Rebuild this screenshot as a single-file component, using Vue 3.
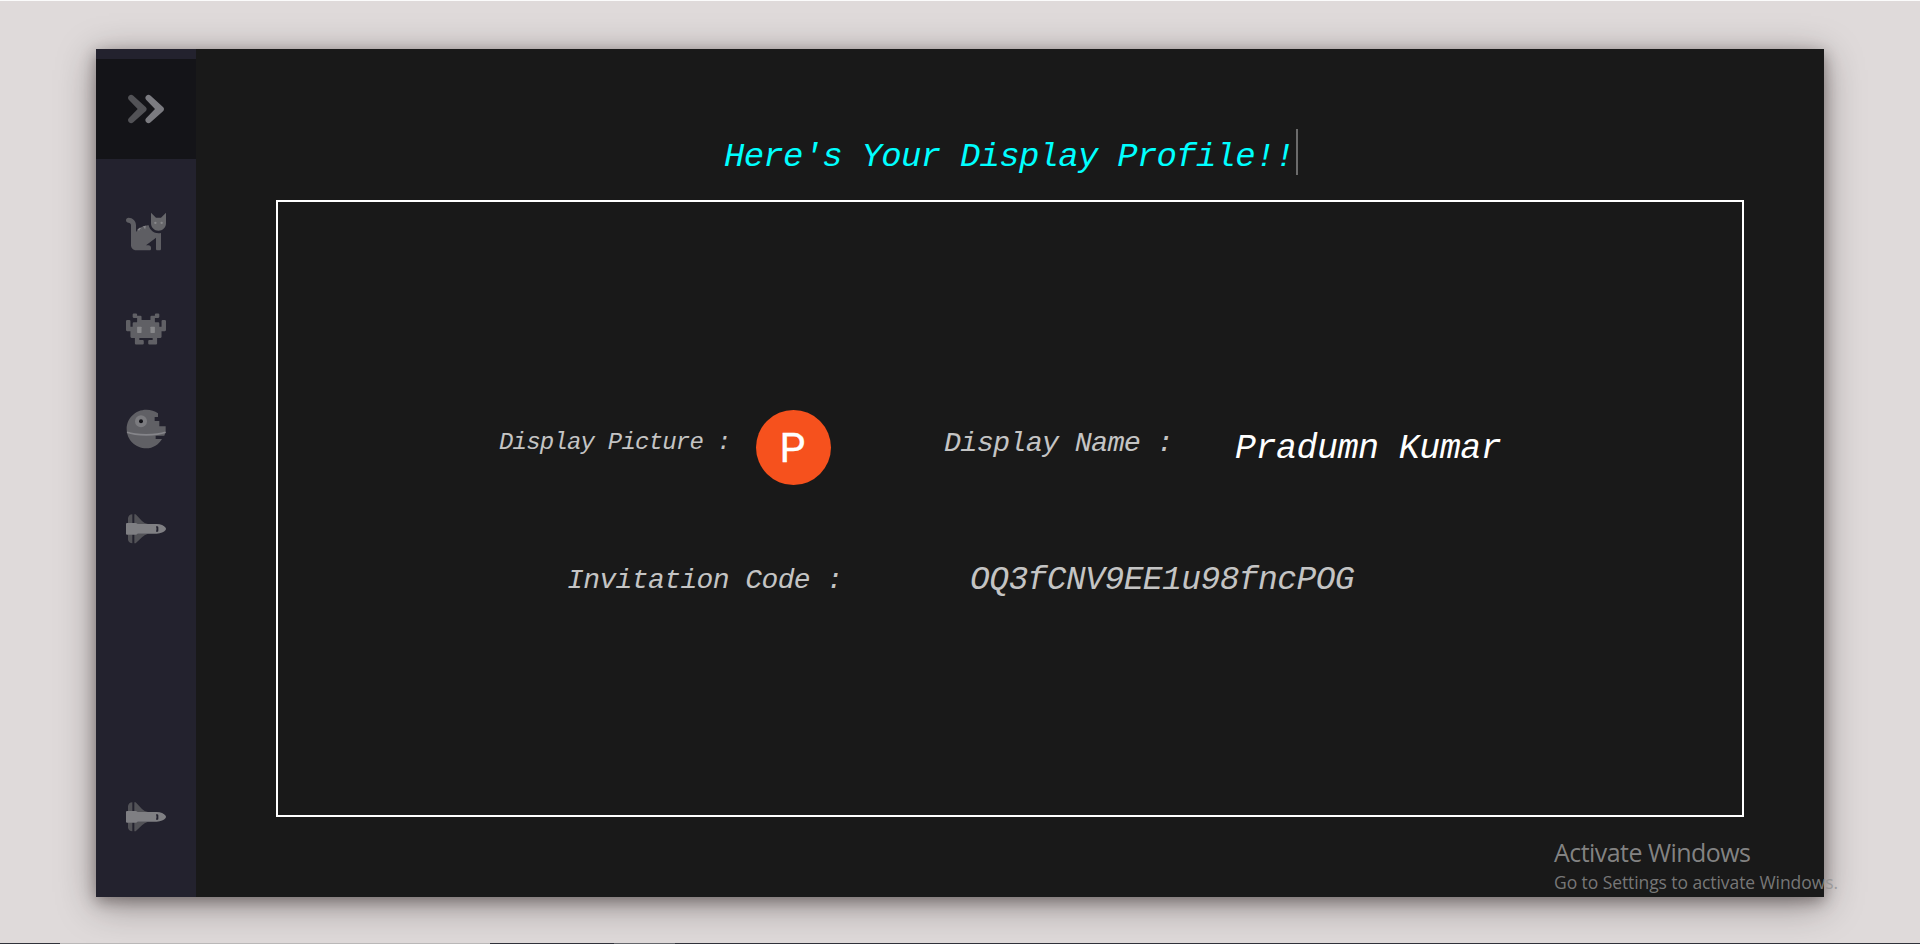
<script setup>
const navItems = [
  { id: 'cat', icon: 'cat' },
  { id: 'monster', icon: 'monster' },
  { id: 'station', icon: 'station' },
  { id: 'shuttle', icon: 'shuttle' },
  { id: 'settings', icon: 'shuttle' },
]
</script>

<template>
  <div class="page">
    <div class="window">
      <nav class="sidebar">
        <div class="nav-item active">
          <svg class="icon" viewBox="123 132 150 150">
            <path fill="#525256" d="M147 180Q141 173 147 167Q153 161 160 167L197 201Q203 207 197 214L160 247Q153 253 147 247Q141 240 147 234L173 207Z" />
            <path fill="#7b7b80" d="M199 180Q193 173 199 167Q205 161 212 167L249 201Q255 207 249 214L212 247Q205 253 199 247Q193 240 199 234L225 207Z" />
          </svg>
        </div>
        <div v-for="item in navItems" :key="item.id" class="nav-item" :class="item.id">
          <svg v-if="item.icon === 'cat'" class="icon" viewBox="33 27 150 150">
            <g transform="translate(48 46) scale(.2344)">
              <path fill="#5e5e63" d="M290.600 192c-20.200 0-106.800 2-162.600 86V192c0-53-43-96-96-96-17.700 0-32 14.300-32 32s14.300 32 32 32 32 14.400 32 32v256c0 35.300 28.700 64 64 64h176c8.800 0 16-7.200 16-16v-16c0-17.700-14.300-32-32-32h-32l128-96v144c0 8.800 7.200 16 16 16h32c8.800 0 16-7.200 16-16V289.900c-10.300 2.700-20.900 4.500-32 4.500-61.800 0-113.500-44-125.400-102.400z" />
              <path fill="#66666a" d="M448 96h-64l-64-64v134.400c0 53 43 96 96 96s96-43 96-96V32z" />
              <path fill="#858589" d="M145 246l35-26 22 24-20-8-14 26zM218 204l37-8-10 50z" />
              <circle cx="376" cy="160" r="15" fill="#88888b" />
              <circle cx="456" cy="160" r="15" fill="#88888b" />
            </g>
          </svg>
          <svg v-else-if="item.icon === 'monster'" class="icon" viewBox="33 27 150 150">
            <g transform="translate(48 48.700) scale(.2083)">
              <path fill="#606065" d="M560 128h-32q-16 0-16 16v80h-32v-48q0-16-16-16h-48V96h48q16 0 16-16V48q0-16-16-16h-32q-16 0-16 16v16h-48q-16 0-16 16v48H224V80q0-16-16-16h-48V48q0-16-16-16h-32q-16 0-16 16v32q0 16 16 16h48v64h-48q-16 0-16 16v48H64v-80q0-16-16-16H16q-16 0-16 16v128q0 16 16 16h48v80q0 16 16 16h48v80q0 16 16 16h96q16 0 16-16v-32q0-16-16-16h-48v-32h192v32h-48q-16 0-16 16v32q0 16 16 16h96q16 0 16-16v-80h48q16 0 16-16v-80h48q16 0 16-16V144q0-16-16-16z" />
              <rect x="160" y="224" width="64" height="88" rx="8" fill="#88888b" />
              <rect x="352" y="224" width="64" height="88" rx="8" fill="#88888b" />
            </g>
          </svg>
          <svg v-else-if="item.icon === 'station'" class="icon" viewBox="33 27 150 150">
            <path fill="#606065" d="M144 55V66H134V78H148V94H167V108Q166 116 163 122H137V132H156C146 149 129 160 109 160C77 160 50 135 50 102C50 70 76 44 109 44C123 44 134 48 144 55Z" />
            <path fill="none" stroke="#85858a" stroke-width="5" d="M51 112C78 122 139 122 167 112" />
            <circle cx="93" cy="79" r="18" fill="#7b7b7f" />
            <circle cx="93" cy="79" r="6" fill="#111116" />
          </svg>
          <svg v-else class="icon" viewBox="33 27 150 150">
            <path fill="#525257" d="M54 85V69Q56 59 67 58V85ZM73 85V58H77L96 78Q103 85 114 87H73ZM54 118V134Q56 144 67 145V118ZM73 118V145H77L96 127Q103 119 114 116H73Z" />
            <path fill="#7f7f83" d="M51 84H76Q80 84 83 87H140Q159 88 167 98Q169 101 167 105Q159 115 140 116H83Q80 119 76 119H51Q48 119 48 116V87Q48 84 51 84Z" />
            <path fill="#24232f" d="M138 94Q145 92 145 97V107Q145 112 138 110Q141 102 138 94Z" />
          </svg>
        </div>
      </nav>

      <main class="content">
        <div class="heading-row"><h1 class="heading">Here's Your Display Profile!!</h1></div>
        <section class="card">
          <div class="row">
            <span class="label picture-label">Display Picture :</span>
            <div class="avatar">P</div>
            <span class="label name-label">Display Name :</span>
            <span class="name">Pradumn Kumar</span>
          </div>
          <div class="row second">
            <span class="label code-label">Invitation Code :</span>
            <span class="code">OQ3fCNV9EE1u98fncPOG</span>
          </div>
        </section>
      </main>
    </div>

    <div class="taskbar"><i></i><i></i><i></i><i></i><i></i></div>
    <aside class="watermark">
      <div class="wm-title">Activate Windows</div>
      <div class="wm-text">Go to Settings to activate Windows.</div>
    </aside>
  </div>
</template>

<style>
body { margin: 0; overflow: hidden; }
</style>

<style scoped>
.page {
  position: relative;
  box-sizing: border-box;
  width: 1920px;
  height: 944px;
  padding: 48px 96px 0;
  border-top: 1px solid #fbfbfb;
  background: #dfdada;
  overflow: hidden;
}
.window {
  display: flex;
  height: 848px;
  background: #191919;
  box-shadow: 0 8px 36px rgba(25, 15, 15, .38), 0 4px 14px rgba(25, 15, 15, .36);
}
.sidebar {
  box-sizing: border-box;
  display: flex;
  flex-direction: column;
  width: 100px;
  padding: 10px 0 30px;
  background: #23222e;
}
.nav-item {
  display: flex;
  align-items: center;
  justify-content: center;
  height: 100px;
}
.active { background: #141418; }
.cat { height: 99px; margin-top: 20px; }
.settings { margin-top: auto; }
.icon { display: block; width: 50px; height: 50px; }
.monster { height: 101px; }
.content {
  flex: 1;
  padding: 80px 80px 0;
  font-family: "Liberation Mono", monospace;
  font-style: italic;
}
.heading-row { display: flex; height: 71px; padding-left: 448px; }
.heading {
  box-sizing: border-box;
  width: 574px;
  height: 46px;
  margin: 0;
  padding-top: 11px;
  border-right: 2px solid #6b6b6b;
  color: #0ff;
  font-size: 34px;
  font-weight: 400;
  letter-spacing: -.74px;
  line-height: 34px;
  white-space: nowrap;
}
.card {
  box-sizing: border-box;
  width: 1468px;
  height: 617px;
  padding-top: 208px;
  border: 2px solid #fff;
}
.row { display: flex; height: 75px; padding-left: 221px; white-space: nowrap; }
.second { margin-top: 75px; padding-left: 289px; }
.label { color: #c4c4c4; line-height: 40px; }
.picture-label { width: 257px; padding-top: 13px; font-size: 24px; letter-spacing: -.8px; }
.avatar {
  width: 75px;
  height: 75px;
  border-radius: 50%;
  background: #f6511d;
  color: #fff;
  font: 400 41px/76px Roboto, sans-serif;
  text-align: center;
  text-indent: -2px;
  -webkit-text-stroke: .3px #fff;
}
.name-label { width: 291px; padding: 14px 0 0 113px; font-size: 28.500px; letter-spacing: -.76px; }
.name { padding-top: 19px; color: #fff; font-size: 35px; letter-spacing: -.52px; line-height: 40px; }
.code-label { width: 403px; padding-top: 1px; font-size: 28px; letter-spacing: -.6px; }
.code { padding-top: 1px; color: #c4c4c4; font-size: 33px; letter-spacing: -.6px; line-height: 40px; }
.taskbar {
  position: absolute;
  left: 0;
  bottom: 0;
  display: grid;
  grid-template-columns: 60px 430px 124px 61px 1fr;
  width: 100%;
  height: 1px;
}
.taskbar i { background: #30323a; }
.taskbar i:nth-child(2) { background: #bab8b8; }
.taskbar i:nth-child(4) { background: #65676c; }
.watermark {
  position: absolute;
  left: 1554px;
  top: 835px;
  color: rgba(145, 145, 145, .9);
  font-family: "Open Sans", sans-serif;
  white-space: nowrap;
}
.wm-title { font-size: 25px; line-height: 32px; letter-spacing: -.55px; }
.wm-text { padding-top: 2px; font-size: 17.500px; line-height: 24px; letter-spacing: -.08px; color: rgba(145, 145, 145, .8); }
</style>
